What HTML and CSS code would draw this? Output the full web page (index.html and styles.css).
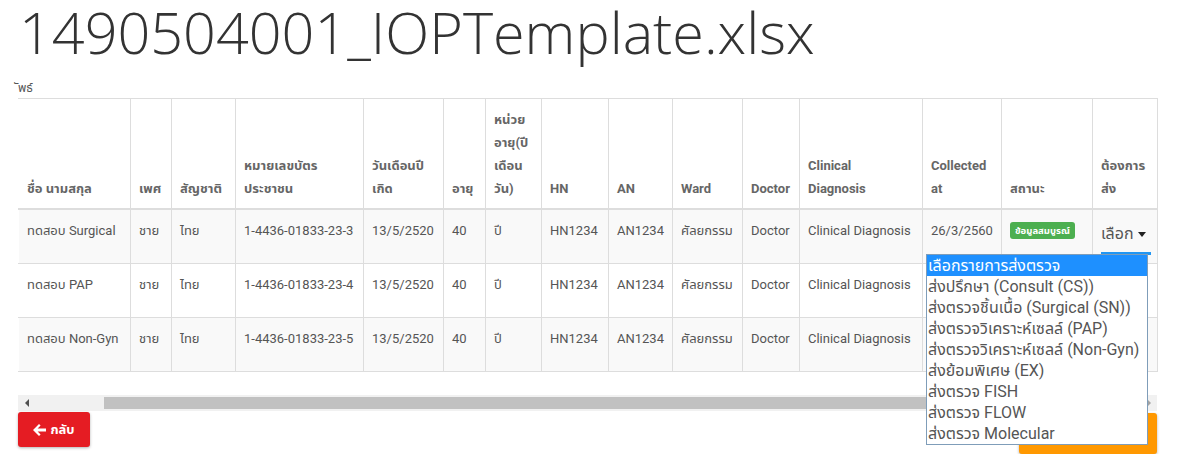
FILE: index.html
```html
<!DOCTYPE html>
<html lang="th">
<head>
    <meta charset="UTF-8">
    <meta name="viewport" content="width=device-width, initial-scale=1.0">
    <title>1490504001_IOPTemplate.xlsx</title>
    <link rel="stylesheet" href="styles.css">
</head>
<body>
    <div class="page">
        <h1 class="file-title">1490504001_IOPTemplate.xlsx</h1>
        <div class="result-label">ัพธ์</div>
        <table class="iop-table">
            <colgroup>
                <col style="width:112px"><col style="width:41px"><col style="width:64px"><col style="width:128px">
                <col style="width:80px"><col style="width:42px"><col style="width:56px"><col style="width:67px">
                <col style="width:64px"><col style="width:70px"><col style="width:57px"><col style="width:123px">
                <col style="width:79px"><col style="width:91px"><col style="width:65px">
            </colgroup>
            <thead>
                <tr>
                    <th>ชื่อ นามสกุล</th>
                    <th>เพศ</th>
                    <th>สัญชาติ</th>
                    <th>หมายเลขบัตร<br>ประชาชน</th>
                    <th>วันเดือนปี<br>เกิด</th>
                    <th>อายุ</th>
                    <th>หน่วย<br>อายุ(ปี<br>เดือน<br>วัน)</th>
                    <th>HN</th>
                    <th>AN</th>
                    <th>Ward</th>
                    <th>Doctor</th>
                    <th>Clinical<br>Diagnosis</th>
                    <th>Collected<br>at</th>
                    <th>สถานะ</th>
                    <th>ต้องการ<br>ส่ง</th>
                </tr>
            </thead>
            <tbody>
                <tr>
                    <td>ทดสอบ Surgical</td>
                    <td>ชาย</td>
                    <td>ไทย</td>
                    <td>1-4436-01833-23-3</td>
                    <td>13/5/2520</td>
                    <td>40</td>
                    <td>ปี</td>
                    <td>HN1234</td>
                    <td>AN1234</td>
                    <td>ศัลยกรรม</td>
                    <td>Doctor</td>
                    <td>Clinical Diagnosis</td>
                    <td>26/3/2560</td>
                    <td><span class="badge-ok">ข้อมูลสมบูรณ์</span></td>
                    <td><div class="send-select focused">เลือก <span class="caret"></span></div></td>
                </tr>
                <tr>
                    <td>ทดสอบ PAP</td>
                    <td>ชาย</td>
                    <td>ไทย</td>
                    <td>1-4436-01833-23-4</td>
                    <td>13/5/2520</td>
                    <td>40</td>
                    <td>ปี</td>
                    <td>HN1234</td>
                    <td>AN1234</td>
                    <td>ศัลยกรรม</td>
                    <td>Doctor</td>
                    <td>Clinical Diagnosis</td>
                    <td>26/3/2560</td>
                    <td><span class="badge-ok">ข้อมูลสมบูรณ์</span></td>
                    <td><div class="send-select">เลือก <span class="caret"></span></div></td>
                </tr>
                <tr>
                    <td>ทดสอบ Non-Gyn</td>
                    <td>ชาย</td>
                    <td>ไทย</td>
                    <td>1-4436-01833-23-5</td>
                    <td>13/5/2520</td>
                    <td>40</td>
                    <td>ปี</td>
                    <td>HN1234</td>
                    <td>AN1234</td>
                    <td>ศัลยกรรม</td>
                    <td>Doctor</td>
                    <td>Clinical Diagnosis</td>
                    <td>26/3/2560</td>
                    <td><span class="badge-ok">ข้อมูลสมบูรณ์</span></td>
                    <td><div class="send-select">เลือก <span class="caret"></span></div></td>
                </tr>
            </tbody>
        </table>
        <div class="hscroll">
            <div class="hscroll-btn"><span class="arrow-left"></span></div>
            <div class="hscroll-track"><div class="hscroll-thumb"></div></div>
            <div class="hscroll-btn"><span class="arrow-right"></span></div>
        </div>
        <div class="actions">
            <button class="btn btn-back">
                <svg width="13" height="12" viewBox="0 0 13 12"><path d="M0 6 L6 0 L7.6 1.6 L4.6 4.5 H13 V7.5 H4.6 L7.6 10.4 L6 12 Z" fill="#fff"/></svg>
                กลับ
            </button>
            <button class="btn btn-next">ส่งตรวจ</button>
        </div>

        <ul class="select-list">
            <li class="selected">เลือกรายการส่งตรวจ</li>
            <li>ส่งปรึกษา (Consult (CS))</li>
            <li>ส่งตรวจชิ้นเนื้อ (Surgical (SN))</li>
            <li>ส่งตรวจวิเคราะห์เซลล์ (PAP)</li>
            <li>ส่งตรวจวิเคราะห์เซลล์ (Non-Gyn)</li>
            <li>ส่งย้อมพิเศษ (EX)</li>
            <li>ส่งตรวจ FISH</li>
            <li>ส่งตรวจ FLOW</li>
            <li>ส่งตรวจ Molecular</li>
        </ul>
    </div>
</body>
</html>
```
FILE: styles.css
```css
body {
    margin: 0;
    background: #fff;
    color: #555;
    font-family: Roboto, "Noto Sans Thai", Tahoma, sans-serif;
    font-size: 13px;
}
.page {
    position: relative;
    width: 1139px;
    padding: 0 31px 0 18px;
}
.file-title {
    margin: 0;
    padding-left: 1px;
    font-family: "Open Sans", sans-serif;
    font-weight: 300;
    font-size: 57.5px;
    line-height: 64px;
    color: #333;
    white-space: nowrap;
}
.result-label {
    margin-top: 14px;
    height: 20px;
    line-height: 20px;
    font-size: 12px;
    color: #555;
}
.iop-table {
    width: 1139px;
    table-layout: fixed;
    border-collapse: collapse;
}
.iop-table th, .iop-table td {
    border: 1px solid #ddd;
    padding: 9px 8px 8px;
    line-height: 23px;
    text-align: left;
    white-space: nowrap;
}
.iop-table th:first-child, .iop-table td:first-child {
    border-left-color: #fff;
}
.iop-table th {
    vertical-align: bottom;
    font-weight: bold;
    color: #666;
    border-bottom: 2px solid #ddd;
    height: 89px;
}
.iop-table td {
    vertical-align: top;
    height: 36px;
}
.iop-table tbody tr:nth-child(odd) td {
    background: #f9f9f9;
}
.badge-ok {
    display: inline-block;
    margin-top: 3px;
    padding: 0 5px;
    background: #4caf50;
    color: #fff;
    font-size: 9.5px;
    font-weight: bold;
    line-height: 17px;
    border-radius: 3px;
    vertical-align: top;
}
.send-select {
    position: relative;
    margin-top: 5px;
    font-size: 16px;
    line-height: 20px;
    color: #555;
}
.send-select.focused::after {
    content: "";
    position: absolute;
    left: 0;
    right: -2px;
    top: 28px;
    height: 3px;
    background: #2196f3;
}
.caret {
    display: inline-block;
    margin-left: 1px;
    vertical-align: middle;
    border-top: 5px solid #222;
    border-left: 4px solid transparent;
    border-right: 4px solid transparent;
}
.hscroll {
    display: flex;
    margin-top: 23px;
    height: 16px;
    background: #f1f1f1;
}
.hscroll-btn {
    width: 17px;
    display: flex;
    align-items: center;
    justify-content: center;
}
.arrow-left {
    border-right: 4px solid #505050;
    border-top: 4px solid transparent;
    border-bottom: 4px solid transparent;
}
.arrow-right {
    border-left: 4px solid #a3a3a3;
    border-top: 4px solid transparent;
    border-bottom: 4px solid transparent;
}
.hscroll-track {
    flex: 1;
    padding: 2px 0 2px 69px;
    display: flex;
}
.hscroll-thumb {
    flex: 1;
    background: #c1c1c1;
}
.actions {
    display: flex;
    justify-content: space-between;
    align-items: flex-start;
    margin-top: 1px;
}
.btn {
    border: none;
    border-radius: 3px;
    color: #fff;
    font-family: Roboto, "Noto Sans Thai", Tahoma, sans-serif;
    font-weight: bold;
    font-size: 13px;
    box-shadow: 0 1px 3px rgba(0, 0, 0, 0.3);
}
.btn-back {
    width: 72px;
    height: 35px;
    background: #e51c23;
    display: flex;
    align-items: center;
    justify-content: center;
    gap: 4px;
}
.btn-next {
    width: 138px;
    height: 41px;
    margin-top: 1px;
    background: #ff9800;
}
.select-list {
    position: absolute;
    left: 926px;
    top: 254px;
    width: 220px;
    margin: 0;
    padding: 0;
    list-style: none;
    background: #fff;
    border: 1px solid #7f9db9;
    font-size: 16px;
    color: #555;
}
.select-list li {
    height: 21px;
    line-height: 21px;
    padding-left: 1px;
    white-space: nowrap;
}
.select-list li.selected {
    background: #1e90ff;
    color: #fff;
}
```
